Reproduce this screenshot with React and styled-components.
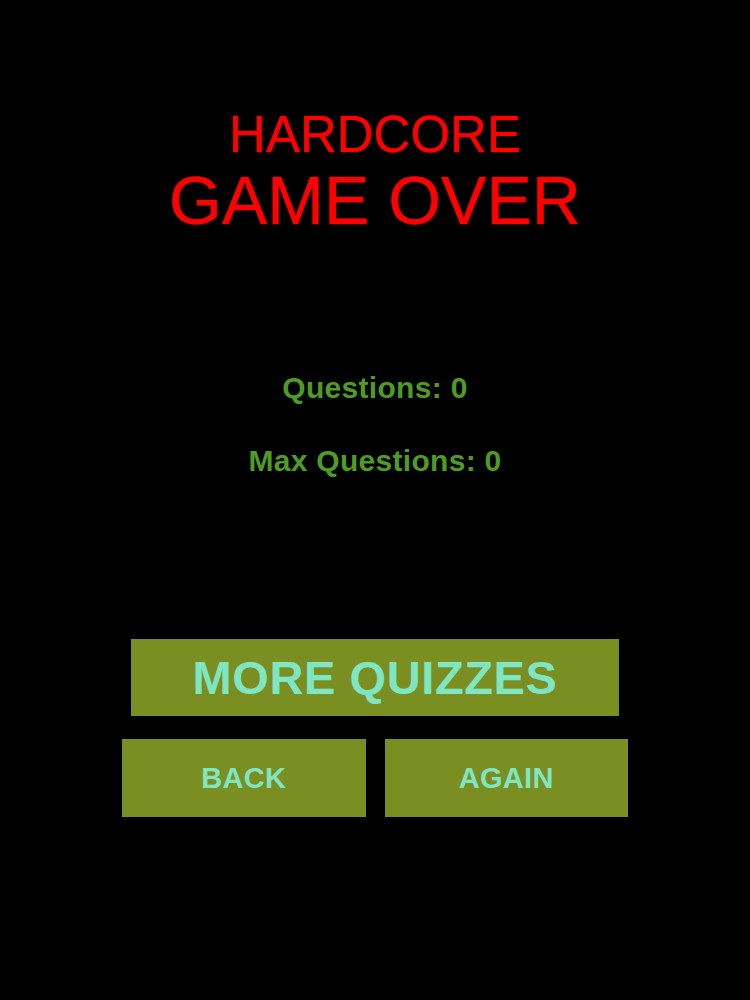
import styled, { createGlobalStyle } from "styled-components";

const GlobalStyle = createGlobalStyle`
  html, body {
    margin: 0;
    padding: 0;
    background: #000;
  }
`;

const Screen = styled.div`
  width: 750px;
  min-height: 1000px;
  background: #000;
  display: flex;
  flex-direction: column;
  align-items: center;
  font-family: "Liberation Sans", Arial, sans-serif;
  padding-top: 109px;
  box-sizing: border-box;
`;

const Title = styled.div`
  display: flex;
  flex-direction: column;
  align-items: center;
  gap: 6px;
  color: #ff0000;
`;

const TitleLine = styled.div`
  font-size: ${(p) => p.$size}px;
  line-height: ${(p) => p.$size}px;
  font-weight: 400;
  -webkit-text-stroke: 0.4px #ff0000;
`;

const Stats = styled.div`
  display: flex;
  flex-direction: column;
  align-items: center;
  gap: 43px;
  margin-top: 139px;
`;

const Stat = styled.div`
  color: #4e9c24;
  font-size: 30px;
  line-height: 30px;
  font-weight: 700;
  letter-spacing: 0.3px;
`;

const Buttons = styled.div`
  display: flex;
  flex-direction: column;
  align-items: center;
  gap: 23px;
  margin-top: 163px;
`;

const Row = styled.div`
  width: 506px;
  display: grid;
  grid-template-columns: 1fr 1fr;
  gap: 19px;
`;

const Button = styled.button`
  all: unset;
  cursor: pointer;
  box-sizing: border-box;
  width: ${(p) => (p.$wide ? "488px" : "auto")};
  height: ${(p) => (p.$wide ? 77 : 78)}px;
  background: #7a8e22;
  color: #7fe6c2;
  font-family: "Liberation Sans", Arial, sans-serif;
  font-weight: 700;
  font-size: ${(p) => (p.$wide ? 47 : 29)}px;
  letter-spacing: ${(p) => (p.$wide ? 0.6 : 0.3)}px;
  line-height: 1;
  display: flex;
  align-items: center;
  justify-content: center;
`;

export default function App() {
  const questions = 0;
  const maxQuestions = 0;

  return (
    <>
      <GlobalStyle />
      <Screen>
        <Title>
          <TitleLine $size={51}>HARDCORE</TitleLine>
          <TitleLine $size={68}>GAME OVER</TitleLine>
        </Title>

        <Stats>
          <Stat>Questions: {questions}</Stat>
          <Stat>Max Questions: {maxQuestions}</Stat>
        </Stats>

        <Buttons>
          <Button $wide>MORE QUIZZES</Button>
          <Row>
            <Button>BACK</Button>
            <Button>AGAIN</Button>
          </Row>
        </Buttons>
      </Screen>
    </>
  );
}
